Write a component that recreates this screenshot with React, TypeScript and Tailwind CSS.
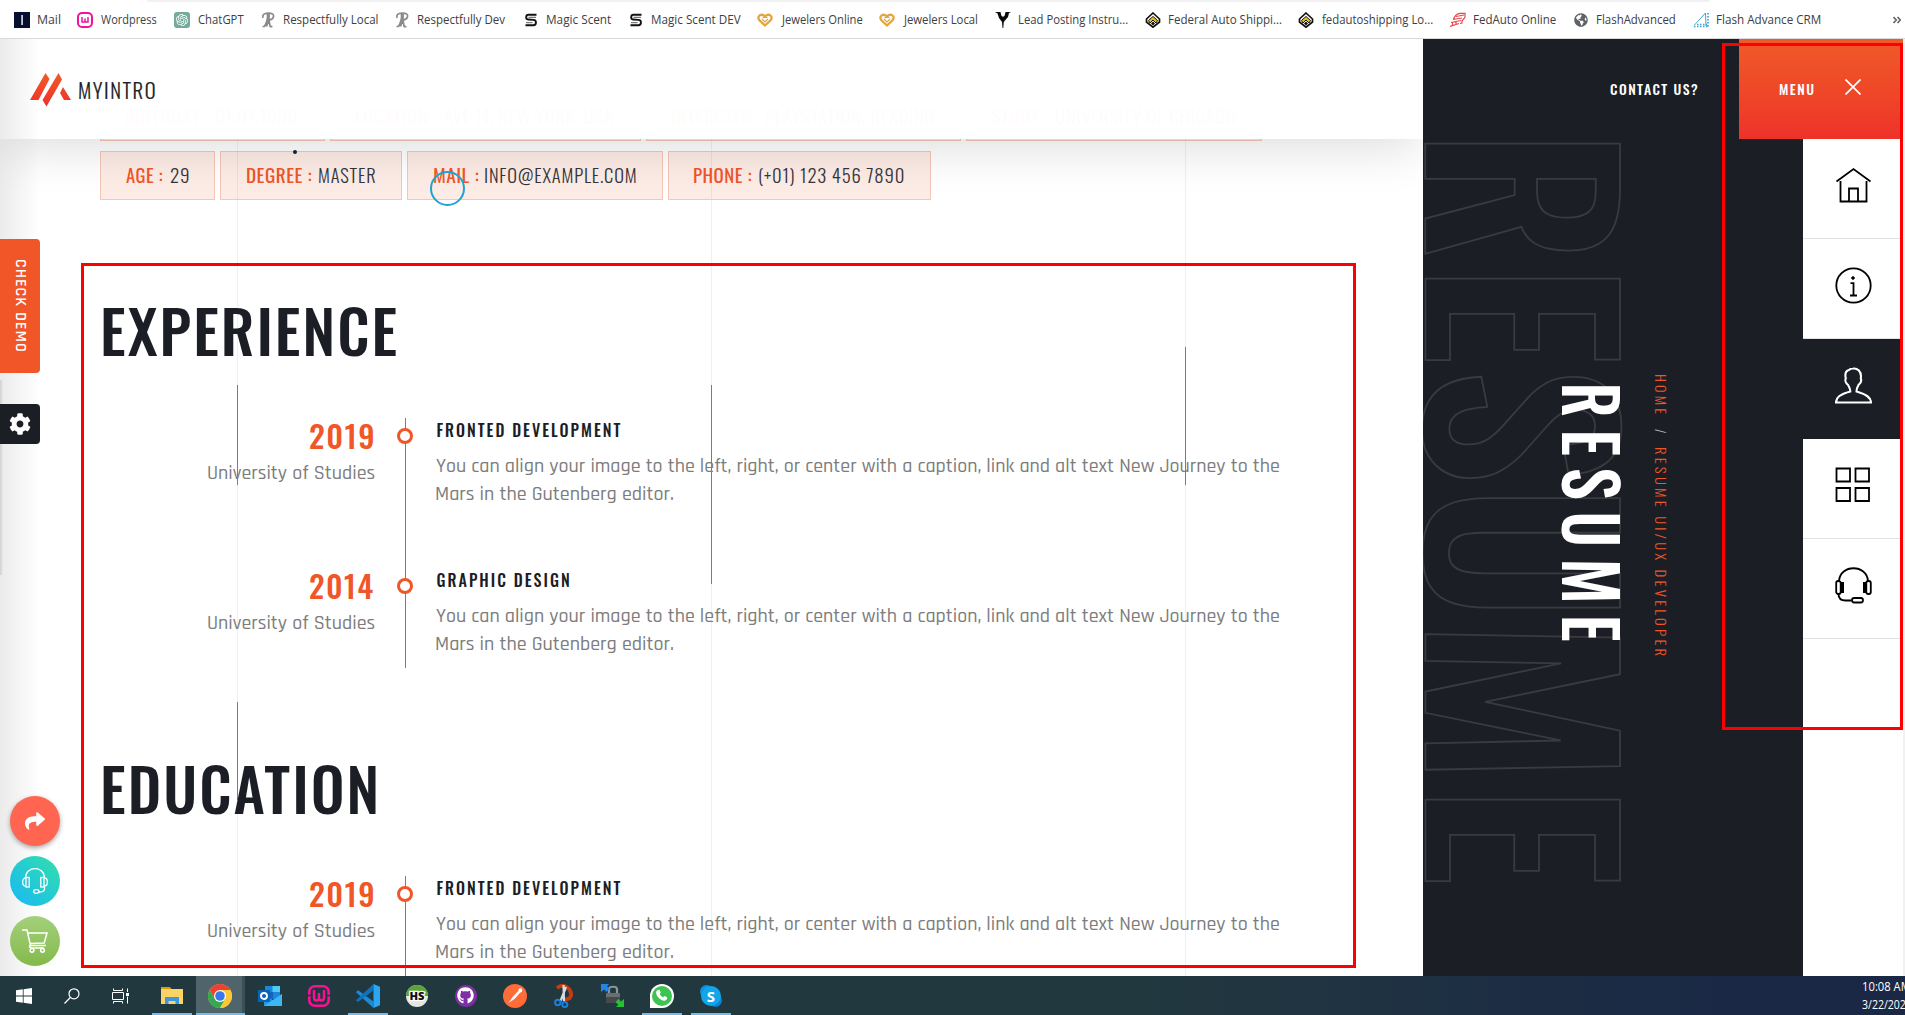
import { useLayoutEffect, useRef, type ReactNode } from 'react';
import { FaShare, FaCog, FaGithub, FaGlobeAmericas } from 'react-icons/fa';
import { SiOpenai } from 'react-icons/si';

const oswald = '[font-family:Oswald,"Roboto_Condensed",Roboto,sans-serif]';
const rajdhani = '[font-family:Rajdhani,"Roboto_Condensed",Roboto,sans-serif]';
const ui = '[font-family:"Open_Sans","Noto_Sans",sans-serif]';

type InkProps = { text: string; w: number; h: number; className?: string; dx?: number };

/** One line of text whose glyphs span exactly `w` px and stand on the bottom edge of a box `h` px tall. */
function Ink({ text, w, h, className = '', dx = 0 }: InkProps) {
  const ref = useRef<HTMLSpanElement>(null);
  useLayoutEffect(() => {
    const el = ref.current;
    const ctx = document.createElement('canvas').getContext('2d');
    if (!el || !ctx) return;
    const cs = getComputedStyle(el);
    ctx.font = `${cs.fontWeight} ${cs.fontSize} ${cs.fontFamily}`;
    const spacing = parseFloat(cs.letterSpacing) || 0;
    const m = ctx.measureText(text);
    const natural = m.actualBoundingBoxLeft + m.actualBoundingBoxRight + spacing * (text.length - 1);
    const scale = w / natural;
    const baseline = h / 2 + (m.fontBoundingBoxAscent - m.fontBoundingBoxDescent) / 2;
    el.style.transform = `translate(${m.actualBoundingBoxLeft * scale + dx}px, ${Math.round(h - baseline)}px) scaleX(${scale})`;
  }, [text, w, h, dx]);
  return (
    <span className="block shrink-0" style={{ width: w, height: h }}>
      <span ref={ref} className={`block w-max origin-top-left whitespace-pre ${className}`} style={{ lineHeight: `${h}px` }}>
        {text}
      </span>
    </span>
  );
}

/** Ink turned a quarter clockwise, so that it reads from top to bottom. */
function Down({ text, w, h, className }: InkProps) {
  return (
    <span className="relative block shrink-0" style={{ width: h, height: w }}>
      <span className="absolute left-full top-0 block origin-top-left rotate-90">
        <Ink text={text} w={w} h={h} className={className} />
      </span>
    </span>
  );
}

/* ---------- bookmarks ---------- */

const Script = () => (
  <svg viewBox="0 0 16 16" className="size-4" fill="none" stroke="#8a8a8a" strokeWidth="1.7">
    <path d="M3 6C2 3 4 1.200 8 1.200c5 0 6 1.300 5.500 3.600C13 7 10.500 8 7.500 8M7.500 1.500C8 6 6.500 11 4.500 14.500H2.500M9 1.500C9.500 6 8 11 6.500 14.500M8.500 8c1.500 1.500 1 4.500 1.500 6 .5 1 1.500.8 2.300.2" />
  </svg>
);
const Sshape = () => (
  <svg viewBox="0 0 16 16" className="size-4" fill="none" stroke="#111" strokeWidth="1.900">
    <path d="M13.500 2.800H5.500C2.500 2.800 2.500 7.300 5 7.500l5.500.4c3.500.3 3 5.300 0 5.300H2.500" />
    <path d="M5.500 5.300H13M3 10.700h6.500" strokeWidth=".7" />
  </svg>
);
const Heart = () => (
  <svg viewBox="0 0 16 16" className="size-4" fill="none" stroke="#e5a53a" strokeWidth="2.300">
    <path d="M8 13.500 2.200 8C-.2 4 4 .8 8 4.400 12 .8 16.200 4 13.800 8z" />
    <path d="M5 7l3 3 3-3M5.500 5.500h5" strokeWidth="1.200" />
  </svg>
);
const Fed = () => (
  <svg viewBox="0 0 16 16" className="size-4">
    <path d="M8 1l6.500 6v3L8 15.200 1.500 10V7z" fill="#fff" stroke="#111" strokeWidth="1.700" />
    <path d="M3.500 8.500 8 4.500l4.500 4L11 11 8 8l-3 3z" fill="#e8c020" stroke="#111" strokeWidth="1" />
    <path d="M6 11.500 8 9.500l2 2-2 2z" fill="#111" />
  </svg>
);

type Mark = { label: string; cell: number; w: number; icon: ReactNode };
const marks: Mark[] = [
  { label: 'Mail', cell: 63, w: 22, icon: <svg viewBox="0 0 16 16" className="size-4"><path fill="#04102e" d="M0 0h16v16H0z" /><path fill="#c9cbd3" d="M7.200 3h1.800v10H7.200z" /></svg> },
  { label: 'Wordpress', cell: 97, w: 56, icon: <svg viewBox="0 0 16 16" className="size-4" fill="none" stroke="#f2139c" strokeWidth="2"><rect x="1" y="1" width="14" height="14" rx="4" /><path d="M5 5v5h6V5M8 6.500V10" strokeWidth="1.500" /></svg> },
  { label: 'ChatGPT', cell: 86, w: 46, icon: <span className="flex size-4 items-center justify-center rounded-[3px] bg-[#74aa9c] text-white"><SiOpenai size={12} /></span> },
  { label: 'Respectfully Local', cell: 134, w: 93.500, icon: <Script /> },
  { label: 'Respectfully Dev', cell: 129, w: 87, icon: <Script /> },
  { label: 'Magic Scent', cell: 105, w: 64, icon: <Sshape /> },
  { label: 'Magic Scent DEV', cell: 129, w: 89.500, icon: <Sshape /> },
  { label: 'Jewelers Online', cell: 122, w: 82, icon: <Heart /> },
  { label: 'Jewelers Local', cell: 116, w: 74, icon: <Heart /> },
  { label: 'Lead Posting Instru...', cell: 150, w: 109, icon: <svg viewBox="0 0 16 16" className="size-4"><path fill="#0b0b0b" d="M0 0h5.500l.8 3.500L8 5l1.700-1.500.8-3.500H16l-2 1-1 4-3 3.500-1.200 1.500L8.300 16h-.8L7 10 4 6 2.500 1.500z" /></svg> },
  { label: 'Federal Auto Shippi...', cell: 153, w: 113, icon: <Fed /> },
  { label: 'fedautoshipping Lo...', cell: 152, w: 111, icon: <Fed /> },
  { label: 'FedAuto Online', cell: 123, w: 82.500, icon: <svg viewBox="0 0 16 16" className="size-4" fill="none" stroke="#e8474b" strokeWidth="1.200"><path d="M3.500 7.500C5 3 7 1.500 10 1.300h5v4L12 9v2l-2 .5M6 4.500l8-1.500M3 7.500l9-1.500M1 10.500l10-2M0 14.500l9-3M2.500 10v3M6 9v3" /></svg> },
  { label: 'FlashAdvanced', cell: 120, w: 78.500, icon: <FaGlobeAmericas size={14} color="#5f6368" className="mx-px mt-px" /> },
  { label: 'Flash Advance CRM', cell: 174, w: 103.500, icon: <svg viewBox="0 0 16 16" className="size-4" fill="none" stroke="#3fa4cf"><path d="M1 13.500 12.500 1l.5 13" strokeWidth="1" /><path d="M1 14.500h13.500M15 1v14M4 12.500h10" strokeWidth="1.700" strokeDasharray="1.500 1.500" /></svg> },
];

function Bookmarks() {
  return (
    <div className="relative flex h-[39px] shrink-0 border-b border-[#d9dadc] bg-white">
      <div className="absolute left-[147px] top-0 h-0.5 w-[1563px] rounded-b bg-[#f1f1f1]" />
      <div className="flex w-full pl-3.5 pt-3">
        {marks.map((m) => (
          <div key={m.label} className="flex shrink-0 gap-2" style={{ width: m.cell }}>
            {m.icon}
            <Ink text={m.label} w={m.w} h={12} className={`${ui} text-[12px] text-[#3c4043]`} />
          </div>
        ))}
        <svg viewBox="0 0 8 8" className="ml-[26px] mt-1 size-2 shrink-0" fill="none" stroke="#5f6368" strokeWidth="1.600"><path d="M.5 1 3.300 4 .5 7M4.500 1 7.300 4 4.500 7" /></svg>
      </div>
    </div>
  );
}

/* ---------- left content ---------- */

type Fact = { label: string; lw: number; gap: number; value: string; vw: number; box: number; pad: number };
const facts1: Fact[] = [
  { label: 'BIRTHDAY :', lw: 84, gap: 6, value: '01.07.1990', vw: 81, box: 225, pad: 25 },
  { label: 'LOCATION :', lw: 82, gap: 6, value: 'AVE 11, NEW YORK, USA', vw: 169, box: 311, pad: 25 },
  { label: 'INTERESTS :', lw: 88, gap: 6, value: 'PLAYSTATION, READING', vw: 168, box: 315, pad: 25 },
  { label: 'STUDY :', lw: 57, gap: 7, value: 'UNIVERSITY OF CHICAGO', vw: 179, box: 296, pad: 25 },
];
const facts2: Fact[] = [
  { label: 'AGE :', lw: 37, gap: 6.500, value: '29', vw: 18.500, box: 115, pad: 25 },
  { label: 'DEGREE :', lw: 65, gap: 6.500, value: 'MASTER', vw: 56.500, box: 182, pad: 26 },
  { label: 'MAIL :', lw: 45, gap: 6, value: 'INFO@EXAMPLE.COM', vw: 151, box: 256, pad: 25.500 },
  { label: 'PHONE :', lw: 58, gap: 6.500, value: '(+01) 123 456 7890', vw: 145, box: 263, pad: 25 },
];

function Facts({ items }: { items: Fact[] }) {
  return (
    <div className="flex gap-[5px]">
      {items.map((f) => (
        <div key={f.label} className="flex h-[49px] items-end border border-[#f6c6b7] bg-[#f05a28]/12 pb-4" style={{ width: f.box, paddingLeft: f.pad }}>
          <Ink text={f.label} w={f.lw} h={15} className={`${oswald} text-[18px] tracking-[0.5px] text-[#f05627]`} />
          <span style={{ width: f.gap }} />
          <Ink text={f.value} w={f.vw} h={15} className={`${oswald} text-[18px] font-light tracking-[0.8px] text-[#34343a]`} />
        </div>
      ))}
    </div>
  );
}

function Entry({ year, title, tw, last }: { year: string; title: string; tw: number; last?: boolean }) {
  const body = `${rajdhani} text-[20px] font-medium text-[#7d7d7d]`;
  return (
    <div className={last ? 'flex h-[100px] shrink-0' : 'flex h-[150px] shrink-0'}>
      <div className="flex w-[274px] flex-col items-end pt-[7px]">
        <span className="mr-[1.5px] block"><Ink text={year} w={63} h={24} className={`${oswald} text-[30px] font-medium tracking-[1.5px] text-[#f05627]`} /></span>
        <span className="mt-[17px] block"><Ink text="University of Studies" w={166.500} h={13} className={body} /></span>
      </div>
      <div className="relative ml-[31px] w-px bg-[#e8552b]">
        <span className="absolute -left-2 top-[10px] size-4 rounded-full border-3 border-[#f05627] bg-white" />
      </div>
      <div className="flex flex-col pl-[30px] pt-[5px]">
        <Ink text={title} w={tw} h={14} dx={0.5} className={`${oswald} text-[16px] font-medium tracking-[2px] text-[#1c1e25]`} />
        <span className="mt-[22px] block"><Ink text="You can align your image to the left, right, or center with a caption, link and alt text New Journey to the" w={843} h={13} className={body} /></span>
        <span className="mt-[15px] block"><Ink text="Mars in the Gutenberg editor." w={237} h={13} className={body} /></span>
      </div>
    </div>
  );
}

function GuideLines() {
  return (
    <div className="absolute inset-0">
      <div className="absolute left-[237px] top-0 h-full w-px bg-[#f0f0f0]" />
      <div className="absolute left-[711px] top-0 h-full w-px bg-[#f0f0f0]" />
      <div className="absolute left-[1185px] top-0 h-full w-px bg-[#f0f0f0]" />
      <div className="absolute left-[237px] top-[346px] h-[100px] w-px bg-[#e8552b]" />
      <div className="absolute left-[237px] top-[663px] h-[98px] w-px bg-[#e8552b]" />
      <div className="absolute left-[711px] top-[346px] h-[199px] w-px bg-[#e8552b]" />
      <div className="absolute left-[1185px] top-[308px] h-[138px] w-px bg-[#e8552b]" />
    </div>
  );
}

function Floating() {
  return (
    <>
      <div className="absolute left-0 top-[341px] h-[195px] w-[3px] bg-linear-to-r from-black/12 to-transparent" />
      <div className="absolute left-0 top-[200px] flex h-[134px] w-10 rounded-r bg-[#f05627] pl-[15.500px] pt-[21px]">
        <Down text="CHECK DEMO" w={91} h={10} className={`${rajdhani} text-[16px] font-semibold tracking-[1px] text-white`} />
      </div>
      <div className="absolute left-0 top-[365px] flex size-10 items-center justify-center rounded-r bg-[#1c1e25] text-white"><FaCog size={22} /></div>
      <div className="absolute left-2.5 top-[757px] flex flex-col gap-2.5">
        <div className="flex size-[50px] items-center justify-center rounded-full bg-[#ff6550] text-white shadow-[0_2px_5px_rgba(0,0,0,0.35)]"><FaShare size={20} /></div>
        <div className="flex size-[50px] items-center justify-center rounded-full bg-linear-to-tr from-[#1fb6f5] to-[#36dfa6]">
          <svg viewBox="0 0 26 26" className="size-[26px]" fill="none" stroke="#fff" strokeWidth="1.300">
            <path d="M3.500 10C3.500-2.400 22.500-2.400 22.500 10M3.500 10c-3.800 0-3.800 8 0 8M22.500 10c3.800 0 3.800 8 0 8v3c0 2-1.500 3-5.500 3" />
            <rect x="4" y="9.500" width="3.200" height="9.500" /><rect x="18.800" y="9.500" width="3.200" height="9.500" /><ellipse cx="14.300" cy="23.500" rx="2.700" ry="1.800" />
          </svg>
        </div>
        <div className="flex size-[50px] items-center justify-center rounded-full bg-linear-to-b from-[#a4d07b] to-[#84b94a]">
          <svg viewBox="0 0 26 26" className="size-[26px]" fill="none" stroke="#fff" strokeWidth="1.500">
            <path d="M0 2h5l3.500 15.500H24M6 5h19l-2.800 10L8 15.500M9 17.500c-2.500 0-1.500 2.500.5 2.500H22" /><circle cx="10" cy="22.300" r="1.900" /><circle cx="20.500" cy="22.300" r="1.900" />
          </svg>
        </div>
      </div>
    </>
  );
}

function Content() {
  const heading = `${oswald} text-[60px] font-medium tracking-[2px] text-[#1c1e25]`;
  return (
    <div className="relative w-[1423px] shrink-0 overflow-hidden bg-white">
      <GuideLines />
      <div className="relative flex flex-col pl-[100px] pt-[53px]">
        <Facts items={facts1} />
        <div className="h-2.5" />
        <Facts items={facts2} />
        <div className="mt-[107px] pl-[3px]"><Ink text="EXPERIENCE" w={293.500} h={49} className={heading} /></div>
        <div className="mt-[62px]">
          <Entry year="2019" title="FRONTED DEVELOPMENT" tw={184} />
          <Entry year="2014" title="GRAPHIC DESIGN" tw={132.500} last />
        </div>
        <div className="mt-[97px] pl-[3px]"><Ink text="EDUCATION" w={272.500} h={49} className={heading} /></div>
        <div className="mt-[62px]">
          <Entry year="2019" title="FRONTED DEVELOPMENT" tw={184} />
        </div>
      </div>
      <header className="absolute inset-x-0 top-0 h-[100px] bg-white/[0.985] shadow-[0_12px_50px_-4px_rgba(0,0,0,0.14)]">
        <div className="flex items-end pl-[30px] pt-[34px]">
          <svg viewBox="0 0 41 34" className="h-[34px] w-[41px]">
            <defs><linearGradient id="brand" x2="0" y2="1"><stop stopColor="#f05a28" /><stop offset="1" stopColor="#ef312b" /></linearGradient></defs>
            <path fill="url(#brand)" d="M15.500 0 19.500 6 8.500 27H0zM28.500 0 32 6.500 16.500 33.500 12.500 27zM33 14 41 27h-7l-4-7z" />
          </svg>
          <span className="mb-2 ml-2 block"><Ink text="MYINTRO" w={76} h={17} className={`${oswald} text-[20px] font-light tracking-[1.5px] text-[#1c1e25] [-webkit-text-stroke:0.2px_#1c1e25]`} /></span>
        </div>
      </header>
      <div className="absolute left-0 top-0 h-full w-10 bg-linear-to-r from-black/8 to-transparent" />
      <Floating />
      <div className="absolute left-[293px] top-[111px] size-1 rounded-full bg-[#0c2530]" />
      <div className="absolute left-[430px] top-[132px] size-[35px] rounded-full border-2 border-[#1ba4d4]" />
      <div className="absolute left-[81px] top-[224px] h-[705px] w-[1275px] border-3 border-[#fe0000]" />
    </div>
  );
}

/* ---------- right panel ---------- */

const outlined = [
  { c: 'R', top: 0, w: 111.500 }, { c: 'E', top: 23.500, w: 82.500 }, { c: 'S', top: 15, w: 103 },
  { c: 'U', top: 19, w: 110 }, { c: 'M', top: 26.500, w: 136 }, { c: 'E', top: 28.500, w: 82.500 },
];
const solid = [
  { c: 'R', top: 0, w: 29.500 }, { c: 'E', top: 17, w: 22.500 }, { c: 'S', top: 14, w: 29.500 },
  { c: 'U', top: 15.500, w: 30 }, { c: 'M', top: 18, w: 38 }, { c: 'E', top: 18, w: 23 },
];

const navIcons: { key: string; active?: boolean; art: ReactNode }[] = [
  { key: 'home', art: <path d="M1.500 14.500 18.500 2l17 12.500M5.500 14v20.500h26V14M14 34V21.500h9V34" /> },
  { key: 'info', art: <><circle cx="18.500" cy="18.500" r="17.200" /><circle cx="18" cy="11" r="1.300" fill="currentColor" strokeWidth="1" /><path d="M15.500 16.200h3v12M15 28.500h7" /></> },
  { key: 'user', active: true, art: <path strokeWidth="2.100" d="M1 35.500h35c0-5-4-8-14.500-11 0-2 .2-3.500 2-6.500 3-2.500 3-5 2.300-6.500C27 4 22 1 18 1.500c-3 0-3.500 1-4 1.500-4 1-4 5-3.200 8.500-.8 1.500-.5 4.500 2.300 6.500 1.800 3 2.200 4.500 2.200 6.500C4.500 27.500 1 30.500 1 35.500z" /> },
  { key: 'works', art: <path d="M1.500 1.500H15v13H1.500zM20.500 1.500H34v13H20.500zM1.500 21H15v13H1.500zM20.500 21H34v13H20.500z" /> },
  { key: 'support', art: <><path d="M4 14C5-3 32-3 33 14M3.500 27c0 4 2 6.500 7 6.500h6" /><rect x="1.200" y="14" width="4.500" height="13" rx="2" /><rect x="31.300" y="14" width="4.500" height="13" rx="2" /><path d="M7.500 15v11M29.500 15v11" strokeWidth="3" /><rect x="17" y="31" width="11" height="4.500" rx="2.200" /></> },
];

function Aside() {
  return (
    <div className="relative z-10 flex w-[480px] shrink-0 flex-col bg-[#1c1e25]">
      <div className="flex h-[100px] shrink-0">
        <div className="w-[316px] pl-[187px] pt-[44px]"><Ink text="CONTACT US?" w={88} h={12} className={`${oswald} text-[14px] font-medium tracking-[1.5px] text-white`} /></div>
        <div className="flex w-[164px] bg-linear-to-b from-[#f05a28] to-[#ee3129] pl-10">
          <span className="block pt-[44px]"><Ink text="MENU" w={35} h={12} className={`${oswald} text-[14px] font-medium tracking-[1.5px] text-white`} /></span>
          <svg viewBox="0 0 16 16" className="ml-[31px] mt-[40px] size-4" fill="none" stroke="#fff" strokeWidth="1.700"><path d="M.5.500l15 15M15.500.500l-15 15" /></svg>
        </div>
      </div>
      <div className="flex grow">
        <div className="relative w-[380px] overflow-hidden">
          <div className="flex flex-col pl-[2px] pt-1">
            {outlined.map((l, i) => (
              <div key={i} style={{ marginTop: l.top }}>
                <Down text={l.c} w={l.w} h={195} className={`${oswald} text-[240px] font-medium text-transparent [-webkit-text-stroke:1.800px_#3a3b3f]`} />
              </div>
            ))}
          </div>
          <div className="absolute left-[139px] top-[247px] flex flex-col">
            {solid.map((l, i) => (
              <div key={i} style={{ marginTop: l.top }}>
                <Down text={l.c} w={l.w} h={58} className={`${oswald} text-[72px] font-medium text-white`} />
              </div>
            ))}
          </div>
          <div className="absolute left-[232px] top-[236px] flex flex-col">
            <Down text="HOME" w={39.500} h={11} className={`${oswald} text-[14px] font-light tracking-[3px] text-[#f05627]`} />
            <span className="h-[14px]" />
            <Down text="/" w={4.500} h={11} className={`${oswald} text-[14px] font-light text-[#b5b5b5]`} />
            <span className="h-[15px]" />
            <Down text="RESUME UI/UX DEVELOPER" w={208} h={11} className={`${oswald} text-[14px] font-light tracking-[3px] text-[#f05627]`} />
          </div>
        </div>
        <nav className="flex w-[100px] flex-col bg-white">
          {navIcons.map((n) => (
            <div key={n.key} className={n.active ? 'h-[100px] bg-[#1c1e25] pl-[31.5px] pt-7 text-white' : 'h-[100px] border-b border-[#e3e3e3] pl-[31.5px] pt-7 text-black'}>
              <svg viewBox="0 0 37 37" className="size-[37px]" fill="none" stroke="currentColor" strokeWidth="1.800">{n.art}</svg>
            </div>
          ))}
        </nav>
      </div>
      <div className="absolute left-[299px] top-1 h-[687px] w-[181px] border-3 border-[#fe0000]" />
    </div>
  );
}

/* ---------- taskbar ---------- */

const system: { key: string; icon: ReactNode }[] = [
  { key: 'start', icon: <svg viewBox="0 0 16 16" className="size-4" fill="#fff"><path d="M0 2.300 6.800 1.300v6.300H0zM7.600 1.200 16 0v7.600H7.600zM0 8.400h6.800v6.300L0 13.800zM7.600 8.400H16V16l-8.400-1.200z" /></svg> },
  { key: 'search', icon: <svg viewBox="0 0 16 16" className="size-4" fill="none" stroke="#fff" strokeWidth="1.200"><circle cx="10" cy="5.800" r="5" /><path d="M6.300 9.500.5 15.500" /></svg> },
  { key: 'view', icon: <svg viewBox="0 0 17 16" className="h-4 w-[17px]" fill="none" stroke="#fff" strokeWidth="1"><path d="M1.500.5v2h9v-2M1.500 15.500v-2h9v2M.5 4.500h11v7H.500zM15.500.500V4M15.500 8.500v7" /><path d="M14 5h3v3h-3z" fill="#fff" stroke="none" /></svg> },
];

const apps: { key: string; open?: boolean; active?: boolean; icon: ReactNode }[] = [
  { key: 'files', open: true, icon: <svg viewBox="0 0 22 20" className="h-5 w-[22px]"><path fill="#d99c14" d="M0 1h9l1.500 2H0z" /><path fill="#fbd365" d="M0 3h22v15H0z" /><path fill="#3f97dc" d="M4 11h14v7h-3.500v-3h-7v3H4z" /></svg> },
  { key: 'chrome', open: true, active: true, icon: (
    <svg viewBox="0 0 24 24" className="size-6"><circle cx="12" cy="12" r="12" fill="#fcc934" /><path d="M12 6h10.400A12 12 0 0 0 1.600 6L6.800 15z" fill="#ea4335" /><path d="M1.600 6A12 12 0 0 0 12 24l5.200-9H6.800z" fill="#34a853" /><path d="M12 6h10.400A12 12 0 0 1 12 24l5.200-9z" fill="#fcc934" /><circle cx="12" cy="12" r="6" fill="#fff" /><circle cx="12" cy="12" r="4.800" fill="#3b78e7" /></svg>) },
  { key: 'outlook', icon: <svg viewBox="0 0 24 22" className="h-[22px] w-6"><path fill="#1a86d9" d="M7 1h15v13H7z" /><path fill="#50c9f5" d="M14.500 1H22v6h-7.500z" /><path fill="#1466b8" d="M7 7h8v7H7z" /><path fill="#1f9be6" d="M6 21V10l9 5 9-6v12z" /><path fill="#3bb8f2" d="M6 21 24 9v12z" /><rect y="5" width="12" height="12" rx="1" fill="#0a64b5" /><circle cx="6" cy="11" r="3" fill="none" stroke="#fff" strokeWidth="1.900" /></svg> },
  { key: 'wamp', icon: <svg viewBox="0 0 22 22" className="size-[22px]" fill="none" stroke="#fa1094" strokeWidth="2.600"><rect x="1.300" y="1.300" width="19.400" height="19.400" rx="5.500" /><path d="M0 10.500h3M19 10.500h3" stroke="#23373f" strokeWidth="1.500" /><path d="M6 5v7.500c0 4 5 4 5 0V8v4.500c0 4 5 4 5 0V5" strokeWidth="2.400" /></svg> },
  { key: 'code', open: true, icon: <svg viewBox="0 0 24 24" className="size-6"><path fill="#1e8ad6" d="M17.500 17.500V24L0 8.300l2-2z" /><path fill="#0f72bd" d="M17.500 0v6.500L2 18 0 16.200z" /><path fill="#2ba6f2" d="M17.500 0 24 2.800v18.400L17.500 24z" /></svg> },
  { key: 'heidi', icon: <svg viewBox="0 0 22 22" className="size-[22px]"><circle cx="11" cy="11" r="11" fill="#e4e6e4" /><path d="M0 11a11 11 0 0 1 22 0z" fill="#58a636" /><text x="11" y="15" textAnchor="middle" fontFamily="Open Sans, sans-serif" fontWeight="800" fontSize="11" stroke="#fff" strokeWidth="2.500" paintOrder="stroke" fill="#111" textLength="15" lengthAdjust="spacingAndGlyphs">HS</text></svg> },
  { key: 'github', icon: <span className="flex size-[22px] items-center justify-center rounded-full bg-[#7d2fa3] text-white"><FaGithub size={17} /></span> },
  { key: 'postman', icon: <svg viewBox="0 0 24 24" className="size-6"><circle cx="12" cy="12" r="12" fill="#ff6c37" /><path d="M18.500 4.500c-2-.8-3.500.8-3 2.300L9.500 13l-1.800 3L5 19l3.500-2 3-2 5.800-6.500c1.800 0 2.800-2.500 1.200-4z" fill="#fff" /></svg> },
  { key: 'snip', icon: <svg viewBox="0 0 20 24" className="h-6 w-5" fill="none"><path d="M3 4c5-4 9-2 12 1 4 5 2 11-4 10" stroke="#c33d12" strokeWidth="3.800" /><path d="M9.500 1 10 17M12 3 6.500 17" stroke="#d8dde0" strokeWidth="2.200" /><circle cx="3.800" cy="18.500" r="2.700" stroke="#1f7fd4" strokeWidth="2" /><circle cx="10.800" cy="20.500" r="2.500" stroke="#1f7fd4" strokeWidth="2" /></svg> },
  { key: 'lock', icon: <svg viewBox="0 0 24 24" className="size-6"><path d="M8 11V5c0-3 8-3 8 0v6" fill="none" stroke="#8f9396" strokeWidth="2.200" /><rect x="5" y="9" width="14" height="10" rx="1" fill="#6a6e71" /><rect x="5" y="13" width="14" height="6" rx="1" fill="#45494c" /><path fill="#2385ea" d="M0 0h8L6 2.200 8.500 5 5.500 8 3 5.500 0 8z" /><path fill="#25c232" d="M23 23h-8l2.200-2.200L14.500 18l3-3 2.500 2.500L23 15z" /></svg> },
  { key: 'whatsapp', open: true, icon: <span className="flex size-6 items-center justify-center rounded-full rounded-bl-none bg-white"><span className="flex size-[20px] items-center justify-center rounded-full bg-[#3cc350]"><svg viewBox="0 0 12 12" className="size-[13px]" fill="#fff"><path d="M3 .8 4.300.7 5.300 3.200 4.400 4.500C5 6 6.200 7 7.500 7.600L8.700 6.400 11.200 7.600C11.500 9.500 10 10.800 8.500 10.800 5 10.500 1.300 7 1 3.500 1 2.200 2 1.200 3 .8z" /></svg></span></span> },
  { key: 'skype', open: true, icon: <svg viewBox="0 0 22 22" className="size-[22px]"><circle cx="6.500" cy="6.500" r="6.500" fill="#0f93e0" /><circle cx="15.500" cy="15.500" r="6.500" fill="#0a7fd4" /><circle cx="11" cy="11" r="10" fill="#12a5ea" /><text x="11" y="16.500" textAnchor="middle" fontFamily="Open Sans, sans-serif" fontWeight="700" fontSize="15" fill="#fff">S</text></svg> },
];

function Taskbar() {
  const clock = `${ui} text-[12px] text-white`;
  return (
    <div className="relative flex h-[39px] shrink-0 bg-linear-to-r from-[#22383f] from-60% to-[#1a2845] to-90%">
      {system.map((t) => (
        <div key={t.key} className="flex w-12 items-center justify-center">{t.icon}</div>
      ))}
      <div className="ml-[3px] flex">
        {apps.map((t) => (
          <div key={t.key} className={t.active ? 'relative flex w-[49px] items-center justify-center border-r-3 border-[#3c5059] bg-[#50646c] pl-0.5' : 'relative flex w-[49px] items-center justify-center'}>
            {t.icon}
            {t.open && <span className={t.active ? 'absolute -right-[3px] bottom-0 left-0 h-0.5 bg-[#76b9ed]' : 'absolute bottom-0 h-0.5 w-10 bg-[#76b9ed]'} />}
          </div>
        ))}
      </div>
      <div className="absolute left-[1862px] top-1.5 flex w-[43px] flex-col gap-[9px] overflow-hidden pb-2">
        <Ink text="10:08 AM" w={47} h={9} dx={1} className={clock} />
        <Ink text="3/22/2023" w={50} h={9} className={clock} />
      </div>
    </div>
  );
}

export default function App() {
  return (
    <div className="flex h-[1015px] w-[1905px] flex-col overflow-hidden bg-white">
      <Bookmarks />
      <div className="flex h-[937px] shrink-0">
        <Content />
        <Aside />
        <div className="w-0.5 bg-[#f1f1f1]" />
      </div>
      <Taskbar />
    </div>
  );
}
